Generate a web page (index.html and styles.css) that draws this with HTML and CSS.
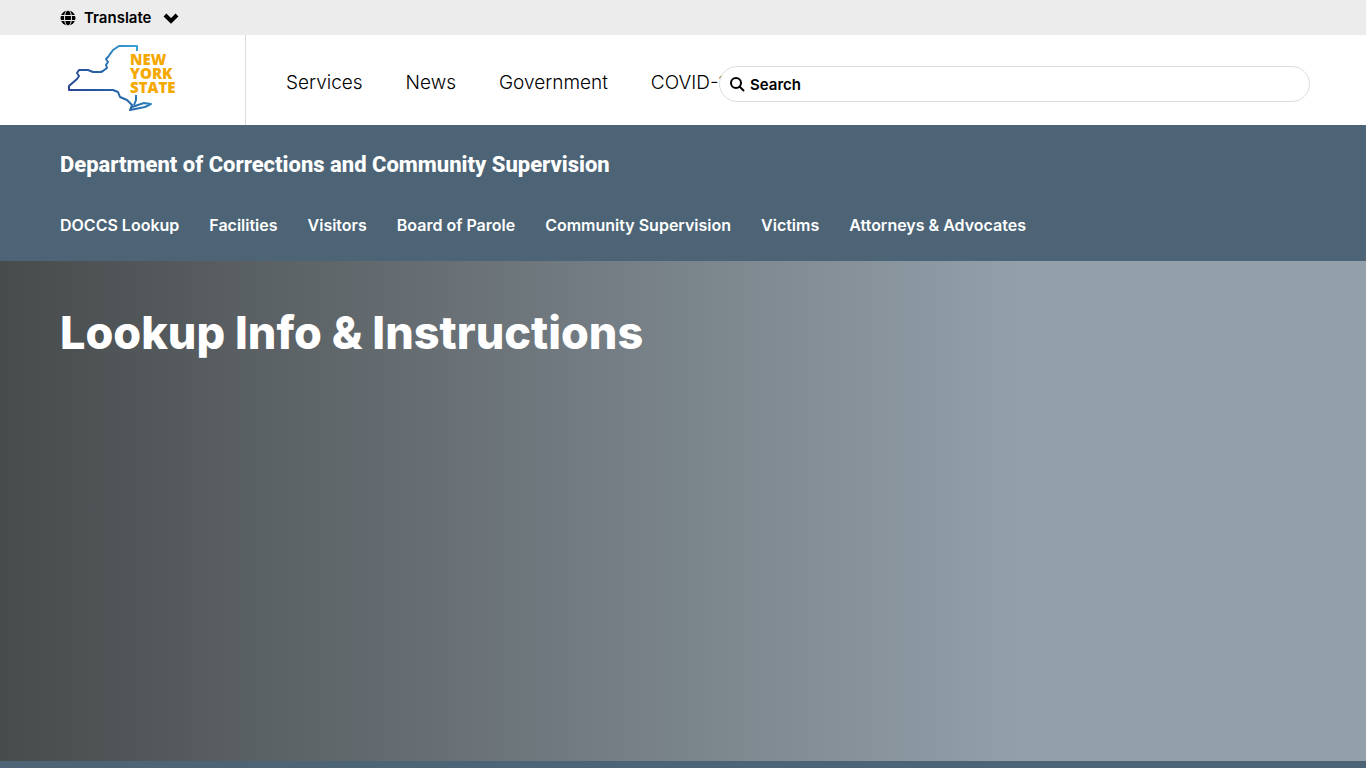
FILE: index.html
```html
<!DOCTYPE html>
<html lang="en">
<head>
    <meta charset="UTF-8">
    <meta name="viewport" content="width=device-width, initial-scale=1.0">
    <link rel="stylesheet" href="styles.css">
    <title>Lookup Info &amp; Instructions | Department of Corrections and Community Supervision</title>
</head>
<body>

    <div class="translate-bar">
        <button type="button" class="translate-button">
            <svg class="globe" viewBox="0 0 16 16" aria-hidden="true">
                <circle cx="8" cy="8" r="7.5" fill="#000"/>
                <g fill="none" stroke="#ececec" stroke-width="1">
                    <ellipse cx="8" cy="8" rx="3.5" ry="8"/>
                    <path d="M0 5.5h16M0 10.5h16"/>
                </g>
            </svg>
            <span>Translate</span>
            <svg class="chevron" viewBox="0 0 16 12" aria-hidden="true">
                <path d="M2 3l6 6 6-6" fill="none" stroke="#000" stroke-width="4"/>
            </svg>
        </button>
    </div>

    <header class="site-header">
        <a href="#" class="logo" aria-label="New York State home">
            <svg viewBox="0 0 112 70" width="112" height="70" aria-hidden="true">
                <defs>
                    <linearGradient id="outline" gradientUnits="userSpaceOnUse" x1="2" y1="55" x2="74" y2="5">
                        <stop offset="0" stop-color="#2b3f8f"/>
                        <stop offset="0.5" stop-color="#2565a8"/>
                        <stop offset="1" stop-color="#3aa5d8"/>
                    </linearGradient>
                </defs>
                <g fill="none" stroke="url(#outline)" stroke-width="2" stroke-linejoin="round">
                    <path d="M71 8V3H53L47 7L42 14L40 16L42 19L40 22L41 25L37 28L35 29H27L22 27L13 27L11 30L13 33L11 36L3 43V47H47L52 49L54 54L61 57L66 62L64 67L79 64L85 61L78 60L66 64"/>
                    <path d="M70 52V57L68 62"/>
                </g>
                <g class="logo-text">
                    <text x="64" y="22">NEW</text>
                    <text x="64" y="36">YORK</text>
                    <text x="64" y="50">STATE</text>
                </g>
            </svg>
        </a>
        <div class="header-content">
            <nav class="main-nav" aria-label="New York State">
                <a href="#">Services</a>
                <a href="#">News</a>
                <a href="#">Government</a>
                <a href="#">COVID-19</a>
            </nav>
            <form class="search" action="#" role="search">
                <label for="search" aria-label="Search">
                    <svg viewBox="0 0 16 16" aria-hidden="true">
                        <circle cx="6" cy="7" r="5" fill="none" stroke="#000" stroke-width="2"/>
                        <path d="M9 10l5 5" stroke="#000" stroke-width="2"/>
                    </svg>
                </label>
                <input type="text" id="search" placeholder="Search">
            </form>
        </div>
    </header>

    <div class="agency-header">
        <a href="#" class="agency-name">Department of Corrections and Community Supervision</a>
        <nav class="agency-nav" aria-label="Agency">
            <a href="#">DOCCS Lookup</a>
            <a href="#">Facilities</a>
            <a href="#">Visitors</a>
            <a href="#">Board of Parole</a>
            <a href="#">Community Supervision</a>
            <a href="#">Victims</a>
            <a href="#">Attorneys &amp; Advocates</a>
        </nav>
    </div>

    <main class="hero">
        <h1>Lookup Info &amp; Instructions</h1>
    </main>

    <div class="section-bar"></div>

</body>
</html>
```
FILE: styles.css
```css
* {
    box-sizing: border-box;
}

body {
    display: flex;
    flex-direction: column;
    min-height: 100vh;
    margin: 0;
    font-family: Inter, "Open Sans", sans-serif;
    color: #000;
    background-color: #fff;
}

a {
    color: inherit;
    text-decoration: none;
}

a:hover {
    text-decoration: underline;
}

.translate-bar {
    display: flex;
    height: 35px;
    padding: 0 60px;
    background-color: #ececec;
}

.translate-button {
    display: flex;
    align-items: center;
    gap: 8px;
    padding: 0;
    border: none;
    background: none;
    font-family: inherit;
    font-size: 15px;
    font-weight: 600;
    color: #000;
    cursor: pointer;
}

.globe {
    width: 16px;
    height: 16px;
}

.chevron {
    width: 16px;
    height: 12px;
    margin-left: 4px;
}

.site-header {
    display: flex;
    height: 90px;
    padding-right: 56px;
}

.logo {
    flex: none;
    width: 246px;
    padding: 8px 0 0 66px;
    border-right: 1px solid #ddd;
}

.logo-text {
    font-family: "Open Sans", sans-serif;
    font-size: 15px;
    font-weight: 800;
    fill: #f5a800;
}

.header-content {
    display: flex;
    align-items: center;
    flex: 1;
    min-width: 0;
    padding: 8px 0 0 40px;
}

.main-nav {
    display: flex;
    flex: 1;
    gap: 43px;
    min-width: 0;
    padding-bottom: 4px;
    font-size: 19px;
    font-weight: 300;
    white-space: nowrap;
}

/* the search box lies over the last nav link on narrower windows */
.search {
    display: flex;
    align-items: center;
    position: relative;
    flex: none;
    width: 591px;
    height: 36px;
    padding: 0 10px;
    border: 1px solid #ddd;
    border-radius: 18px;
    background-color: #fff;
}

.search label {
    display: flex;
}

.search svg {
    width: 16px;
    height: 16px;
}

.search input {
    flex: 1;
    min-width: 0;
    padding: 0 4px;
    border: none;
    outline: none;
    background: none;
    font-family: inherit;
    font-size: 15px;
    font-weight: 600;
}

.search input::placeholder {
    color: #000;
}

.agency-header {
    padding: 25px 60px;
    background-color: #4c6476;
    color: #fff;
}

.agency-name {
    display: block;
    font-family: Roboto, sans-serif;
    font-size: 22px;
    font-weight: 800;
    line-height: 30px;
}

.agency-nav {
    display: flex;
    flex-wrap: wrap;
    gap: 30px;
    margin-top: 34px;
    font-size: 16px;
    font-weight: 600;
    line-height: 22px;
}

.hero {
    min-height: 500px;
    padding: 42px 60px;
    background: linear-gradient(to right, #474b4c 0%, #93a0aa 75%);
    color: #fff;
}

.hero h1 {
    margin: 0;
    font-size: 45px;
    font-weight: 800;
    line-height: 60px;
}

.section-bar {
    flex: 1;
    background-color: #4c6476;
}
```
